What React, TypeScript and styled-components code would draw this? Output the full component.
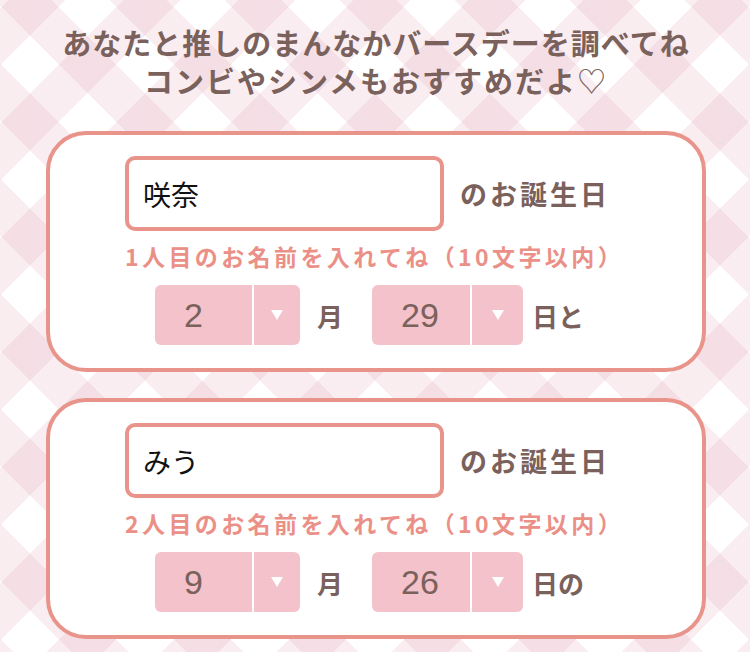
import React from 'react'
import styled, { createGlobalStyle } from 'styled-components'

const BROWN = '#7a615c'
const SALMON = '#e9948a'
const PINK = '#f4c2cb'

const stripe = 'rgba(222,150,172,0.17)'

const GlobalStyle = createGlobalStyle`
  html, body {
    margin:0;
    padding:0;
  }
  body {
    min-height:100vh;
    background-color:#fff;
    background-image:
      linear-gradient(45deg, ${stripe} 0 12.5%, transparent 12.5% 37.5%, ${stripe} 37.5% 62.5%, transparent 62.5% 87.5%, ${stripe} 87.5% 100%),
      linear-gradient(-45deg, ${stripe} 0 12.5%, transparent 12.5% 37.5%, ${stripe} 37.5% 62.5%, transparent 62.5% 87.5%, ${stripe} 87.5% 100%);
    background-size:115px 115px;
    background-position:30px 7px;
    font-family:"Noto Sans CJK JP", sans-serif;
  }
`

const Page = styled.main`
  padding:23px 44px 15px 46px;
`

const Title = styled.h1`
  margin:0 0 32px;
  text-align:center;
  font-size:29px;
  line-height:38px;
  font-weight:700;
  color:${BROWN};
`

const TitleLine = styled.span<{ $spacing: number }>`
  display:block;
  letter-spacing:${p => p.$spacing}px;
`

const Heart = styled.span`
  font-weight:400;
`

const Card = styled.section`
  box-sizing:border-box;
  width:660px;
  margin-bottom:26px;
  padding:21px 0 23px 75px;
  border:4px solid ${SALMON};
  border-radius:40px;
  background:#fff;
`

const NameRow = styled.div`
  display:flex;
  align-items:center;
  gap:16px;
`

const NameInput = styled.input`
  box-sizing:border-box;
  width:319px;
  height:75px;
  padding:0 0 0 14px;
  border:4px solid ${SALMON};
  border-radius:10px;
  background:#fff;
  font-family:"Noto Sans CJK JP", sans-serif;
  font-size:28px;
  color:#111;
  outline:none;
`

const Label = styled.span<{ $spacing?: number }>`
  font-size:27px;
  font-weight:700;
  color:${BROWN};
  letter-spacing:${p => p.$spacing ?? 0}px;
`

const Hint = styled.p`
  margin:10px 0 14px;
  font-size:23px;
  line-height:30px;
  font-weight:700;
  color:#eb9087;
  letter-spacing:3.4px;
  white-space:nowrap;
`

const DateRow = styled.div`
  display:flex;
  align-items:center;
  margin-left:30px;
`

const Picker = styled.div<{ $width: number }>`
  display:flex;
  width:${p => p.$width}px;
  height:60px;
  border-radius:6px;
  overflow:hidden;
  background:${PINK};
`

const PickerSelect = styled.select`
  flex:1;
  min-width:0;
  height:100%;
  padding:0 0 0 29px;
  border:none;
  background:transparent;
  appearance:none;
  font-family:"Liberation Sans", Arial, sans-serif;
  font-size:34px;
  color:${BROWN};
  outline:none;
`

const PickerArrow = styled.div<{ $width: number }>`
  display:flex;
  align-items:center;
  justify-content:center;
  width:${p => p.$width}px;
  border-left:2px solid #fff;
`

const Unit = styled.span<{ $left: number; $right?: number }>`
  margin:0 ${p => p.$right ?? 0}px 0 ${p => p.$left}px;
  font-size:26px;
  font-weight:700;
  color:${BROWN};
`

const range = (from: number, to: number) =>
  Array.from({ length: to - from + 1 }, (_, i) => from + i)

const Arrow = () => (
  <svg width="12" height="10" viewBox="0 0 12 10">
    <polygon points="0,0 12,0 6,10" fill="#fff" />
  </svg>
)

type Person = {
  name: string
  order: number
  month: number
  day: number
  tail: string
}

const people: Person[] = [
  { name: '咲奈', order: 1, month: 2, day: 29, tail: '日と' },
  { name: 'みう', order: 2, month: 9, day: 26, tail: '日の' },
]

const PersonCard = ({ person }: { person: Person }) => (
  <Card>
    <NameRow>
      <NameInput defaultValue={person.name} maxLength={10} />
      <Label $spacing={3}>のお誕生日</Label>
    </NameRow>
    <Hint>{person.order}人目のお名前を入れてね（10文字以内）</Hint>
    <DateRow>
      <Picker $width={145}>
        <PickerSelect defaultValue={person.month}>
          {range(1, 12).map(m => (
            <option key={m} value={m}>{m}</option>
          ))}
        </PickerSelect>
        <PickerArrow $width={46}>
          <Arrow />
        </PickerArrow>
      </Picker>
      <Unit $left={17} $right={29}>月</Unit>
      <Picker $width={151}>
        <PickerSelect defaultValue={person.day}>
          {range(1, 31).map(d => (
            <option key={d} value={d}>{d}</option>
          ))}
        </PickerSelect>
        <PickerArrow $width={51}>
          <Arrow />
        </PickerArrow>
      </Picker>
      <Unit $left={9} $right={0}>{person.tail}</Unit>
    </DateRow>
  </Card>
)

const App = () => {
  return (
    <>
      <GlobalStyle />
      <Page>
        <Title>
          <TitleLine $spacing={1}>あなたと推しのまんなかバースデーを調べてね</TitleLine>
          <TitleLine $spacing={2}>
            コンビやシンメもおすすめだよ<Heart>♡</Heart>
          </TitleLine>
        </Title>
        {people.map(p => (
          <PersonCard key={p.order} person={p} />
        ))}
      </Page>
    </>
  )
}

export default App
